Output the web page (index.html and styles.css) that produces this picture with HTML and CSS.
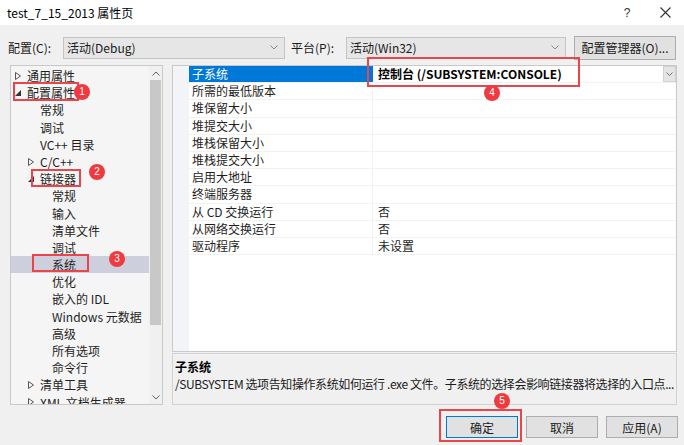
FILE: index.html
```html
<!DOCTYPE html>
<html>
<head>
<meta charset="utf-8">
<link rel="stylesheet" href="styles.css">
</head>
<body>
<div class="dialog">
  <div class="titlebar">
    <span class="title">test_7_15_2013 属性页</span>
    <span class="tb-btn help">?</span>
    <span class="tb-btn close"><svg width="11" height="11" viewBox="0 0 11 11"><path d="M0.5 0.5L10.5 10.5M10.5 0.5L0.5 10.5" stroke="#333" stroke-width="1.1" fill="none"/></svg></span>
  </div>
  <div class="main">
    <div class="config-row">
      <span class="lbl lbl-config">配置(C):</span>
      <div class="select sel-config"><span>活动(Debug)</span><svg class="chev" width="8" height="5" viewBox="0 0 8 5"><path d="M0.5 0.5L4 4L7.5 0.5" stroke="#8a8a8a" fill="none"/></svg></div>
      <span class="lbl lbl-platform">平台(P):</span>
      <div class="select sel-platform"><span>活动(Win32)</span><svg class="chev" width="8" height="5" viewBox="0 0 8 5"><path d="M0.5 0.5L4 4L7.5 0.5" stroke="#8a8a8a" fill="none"/></svg></div>
      <div class="btn btn-mgr">配置管理器(O)...</div>
    </div>
    <div class="content">
      <div class="tree">
        <div class="tree-list">
          <div class="trow l0"><span class="arr"><svg width="6" height="8" viewBox="0 0 6 8"><path d="M0.5 0.5L5.5 4L0.5 7.5Z" stroke="#555" fill="none"/></svg></span>通用属性</div>
          <div class="trow l0"><span class="arr"><svg width="6" height="6" viewBox="0 0 6 6"><path d="M6 0L6 6L0 6Z" fill="#333"/></svg></span>配置属性</div>
          <div class="trow l1"><span class="arr"></span>常规</div>
          <div class="trow l1"><span class="arr"></span>调试</div>
          <div class="trow l1"><span class="arr"></span>VC++ 目录</div>
          <div class="trow l1"><span class="arr"><svg width="6" height="8" viewBox="0 0 6 8"><path d="M0.5 0.5L5.5 4L0.5 7.5Z" stroke="#555" fill="none"/></svg></span>C/C++</div>
          <div class="trow l1"><span class="arr"><svg width="6" height="6" viewBox="0 0 6 6"><path d="M6 0L6 6L0 6Z" fill="#333"/></svg></span>链接器</div>
          <div class="trow l2">常规</div>
          <div class="trow l2">输入</div>
          <div class="trow l2">清单文件</div>
          <div class="trow l2">调试</div>
          <div class="trow l2 sel">系统</div>
          <div class="trow l2">优化</div>
          <div class="trow l2">嵌入的 IDL</div>
          <div class="trow l2">Windows 元数据</div>
          <div class="trow l2">高级</div>
          <div class="trow l2">所有选项</div>
          <div class="trow l2">命令行</div>
          <div class="trow l1"><span class="arr"><svg width="6" height="8" viewBox="0 0 6 8"><path d="M0.5 0.5L5.5 4L0.5 7.5Z" stroke="#555" fill="none"/></svg></span>清单工具</div>
          <div class="trow l1"><span class="arr"><svg width="6" height="8" viewBox="0 0 6 8"><path d="M0.5 0.5L5.5 4L0.5 7.5Z" stroke="#555" fill="none"/></svg></span>XML 文档生成器</div>
        </div>
        <div class="vscroll">
          <div class="sb-arrow"><svg width="8" height="5" viewBox="0 0 8 5"><path d="M0.5 4.5L4 1L7.5 4.5" stroke="#606060" fill="none"/></svg></div>
          <div class="sb-track"><div class="sb-thumb"></div></div>
          <div class="sb-arrow"><svg width="8" height="5" viewBox="0 0 8 5"><path d="M0.5 0.5L4 4L7.5 0.5" stroke="#606060" fill="none"/></svg></div>
        </div>
      </div>
      <div class="right">
        <div class="grid">
          <div class="gutter"></div>
          <div class="rows">
            <div class="grow selrow"><div class="gname">子系统</div><div class="gval bold"><span>控制台 (/SUBSYSTEM:CONSOLE)</span><span class="dd"><svg width="7" height="4" viewBox="0 0 7 4"><path d="M0.5 0.5L3.5 3.5L6.5 0.5" stroke="#707070" fill="none"/></svg></span></div></div>
            <div class="grow"><div class="gname">所需的最低版本</div><div class="gval"></div></div>
            <div class="grow"><div class="gname">堆保留大小</div><div class="gval"></div></div>
            <div class="grow"><div class="gname">堆提交大小</div><div class="gval"></div></div>
            <div class="grow"><div class="gname">堆栈保留大小</div><div class="gval"></div></div>
            <div class="grow"><div class="gname">堆栈提交大小</div><div class="gval"></div></div>
            <div class="grow"><div class="gname">启用大地址</div><div class="gval"></div></div>
            <div class="grow"><div class="gname">终端服务器</div><div class="gval"></div></div>
            <div class="grow"><div class="gname">从 CD 交换运行</div><div class="gval">否</div></div>
            <div class="grow"><div class="gname">从网络交换运行</div><div class="gval">否</div></div>
            <div class="grow"><div class="gname">驱动程序</div><div class="gval">未设置</div></div>
          </div>
        </div>
        <div class="desc">
          <div class="desc-title">子系统</div>
          <div class="desc-text">/SUBSYSTEM 选项告知操作系统如何运行 .exe 文件。子系统的选择会影响链接器将选择的入口点...</div>
        </div>
      </div>
    </div>
    <div class="footer">
      <div class="btn fbtn default">确定</div>
      <div class="btn fbtn">取消</div>
      <div class="btn fbtn">应用(A)</div>
    </div>
  </div>

  <div class="mark box1"></div>
  <div class="badge b1">1</div>
  <div class="mark box2"></div>
  <div class="badge b2">2</div>
  <div class="mark box3"></div>
  <div class="badge b3">3</div>
  <div class="mark box4"></div>
  <div class="badge b4">4</div>
  <div class="mark box5"></div>
  <div class="badge b5">5</div>
</div>
</body>
</html>
```

FILE: styles.css
```css
* { box-sizing: border-box; }
html, body { margin: 0; padding: 0; }
body {
  width: 684px;
  height: 445px;
  overflow: hidden;
  font-family: "Noto Sans CJK SC", "Noto Sans", sans-serif;
  font-size: 12px;
  color: #1a1a1a;
  background: #f0f0f0;
}
.dialog { position: relative; width: 684px; height: 445px; }

.titlebar {
  height: 25px;
  background: #ffffff;
  display: flex;
  align-items: center;
  padding-left: 7px;
}
.title { flex: 1; font-size: 12px; color: #000; }
.tb-btn { display: flex; align-items: center; justify-content: center; color: #333; }
.help { width: 12px; margin-right: 26px; font-size: 12px; font-family: "Liberation Sans", sans-serif; }
.close { width: 12px; margin-right: 13px; }

.main { height: 420px; background: #f0f0f0; }

.config-row {
  display: flex;
  align-items: center;
  padding-top: 11px;
  padding-left: 8px;
  height: 34px;
}
.lbl { width: 55px; line-height: 22px; color: #1a1a1a; }
.lbl-platform { margin-left: 6px; }
.select {
  height: 22px;
  background: #e6e6e6;
  border: 1px solid #c4c4c4;
  display: flex;
  align-items: center;
  justify-content: space-between;
  padding: 0 5px 0 3px;
}
.sel-config { width: 222px; }
.sel-platform { width: 220px; }
.chev { margin-right: 1px; }
.btn {
  background: #e1e1e1;
  border: 1px solid #adadad;
  display: flex;
  align-items: center;
  justify-content: center;
  color: #1a1a1a;
}
.btn-mgr { margin-left: 8px; width: 102px; height: 24px; }

.content {
  display: flex;
  margin-top: 6px;
  margin-left: 10px;
  gap: 9px;
  height: 340px;
}
.tree {
  width: 153px;
  height: 340px;
  border: 1px solid #c9c9c9;
  background: #f5f5f5;
  display: flex;
  overflow: hidden;
}
.tree-list { width: 138px; padding-top: 1px; overflow: hidden; }
.trow {
  height: 17.2px;
  line-height: 17.2px;
  display: flex;
  align-items: center;
  white-space: nowrap;
  color: #1e1e1e;
}
.trow .arr { width: 13px; display: flex; align-items: center; justify-content: flex-start; padding-left: 1px; }
.l0 { padding-left: 3px; }
.l1 { padding-left: 16px; }
.l2 { padding-left: 41px; }
.trow.sel { background: #cdd0dc; }

.vscroll {
  width: 13px;
  display: flex;
  flex-direction: column;
  background: #f0f0f0;
}
.sb-arrow { height: 14px; display: flex; align-items: center; justify-content: center; }
.sb-track { flex: 1; padding: 0 1px; }
.sb-thumb { height: 245px; background: #c8c8c8; }

.right { width: 505px; display: flex; flex-direction: column; }
.grid {
  height: 287px;
  border: 1px solid #c9c9c9;
  background: #ffffff;
  display: flex;
}
.gutter { width: 16px; background: #f2f4f8; }
.rows { flex: 1; }
.grow {
  height: 17.2px;
  display: flex;
  border-bottom: 1px solid #f2f2f2;
}
.gname {
  width: 184px;
  padding-left: 3px;
  line-height: 16px;
  border-right: 1px solid #f2f2f2;
  white-space: nowrap;
  color: #1e1e1e;
}
.gval {
  flex: 1;
  padding-left: 5px;
  line-height: 16px;
  display: flex;
  justify-content: space-between;
  color: #1e1e1e;
}
.selrow .gname { background: #0078d7; color: #ffffff; border-right-color: #0078d7; }
.bold { font-weight: bold; color: #000; }
.dd {
  width: 13px;
  height: 16px;
  background: #e5e5e5;
  border: 1px solid #d0d0d0;
  display: flex;
  align-items: center;
  justify-content: center;
  margin-right: 0;
}

.desc {
  margin-top: 1px;
  height: 52px;
  border: 1px solid #d2d2d2;
  background: #f0f0f0;
  padding: 4px 2px 0 2px;
  overflow: hidden;
}
.desc-title { font-weight: bold; line-height: 17px; color: #000; }
.desc-text { line-height: 17px; white-space: nowrap; color: #1a1a1a; letter-spacing: -0.4px; }

.footer {
  display: flex;
  justify-content: flex-end;
  gap: 8px;
  margin-top: 11px;
  padding-right: 6px;
}
.fbtn { width: 72px; height: 22px; }
.fbtn.default { border-color: #0078d7; }

.mark {
  position: absolute;
  border: 2px solid #e8454c;
}
.box1 { left: 13px; top: 82px; width: 66px; height: 19px; }
.box2 { left: 31px; top: 169px; width: 50px; height: 18px; }
.box3 { left: 32px; top: 254px; width: 57px; height: 18px; }
.box4 { left: 367px; top: 57px; width: 213px; height: 30px; }
.box5 { left: 439px; top: 409px; width: 83px; height: 33px; }
.badge {
  position: absolute;
  width: 16px;
  height: 16px;
  border-radius: 50%;
  background: #ef3a3f;
  color: #ffffff;
  font-family: "Liberation Sans", sans-serif;
  font-size: 10px;
  line-height: 16px;
  text-align: center;
}
.b1 { left: 74px; top: 84px; }
.b2 { left: 89px; top: 164px; }
.b3 { left: 109px; top: 251px; }
.b4 { left: 484px; top: 85px; }
.b5 { left: 494px; top: 393px; }
```
